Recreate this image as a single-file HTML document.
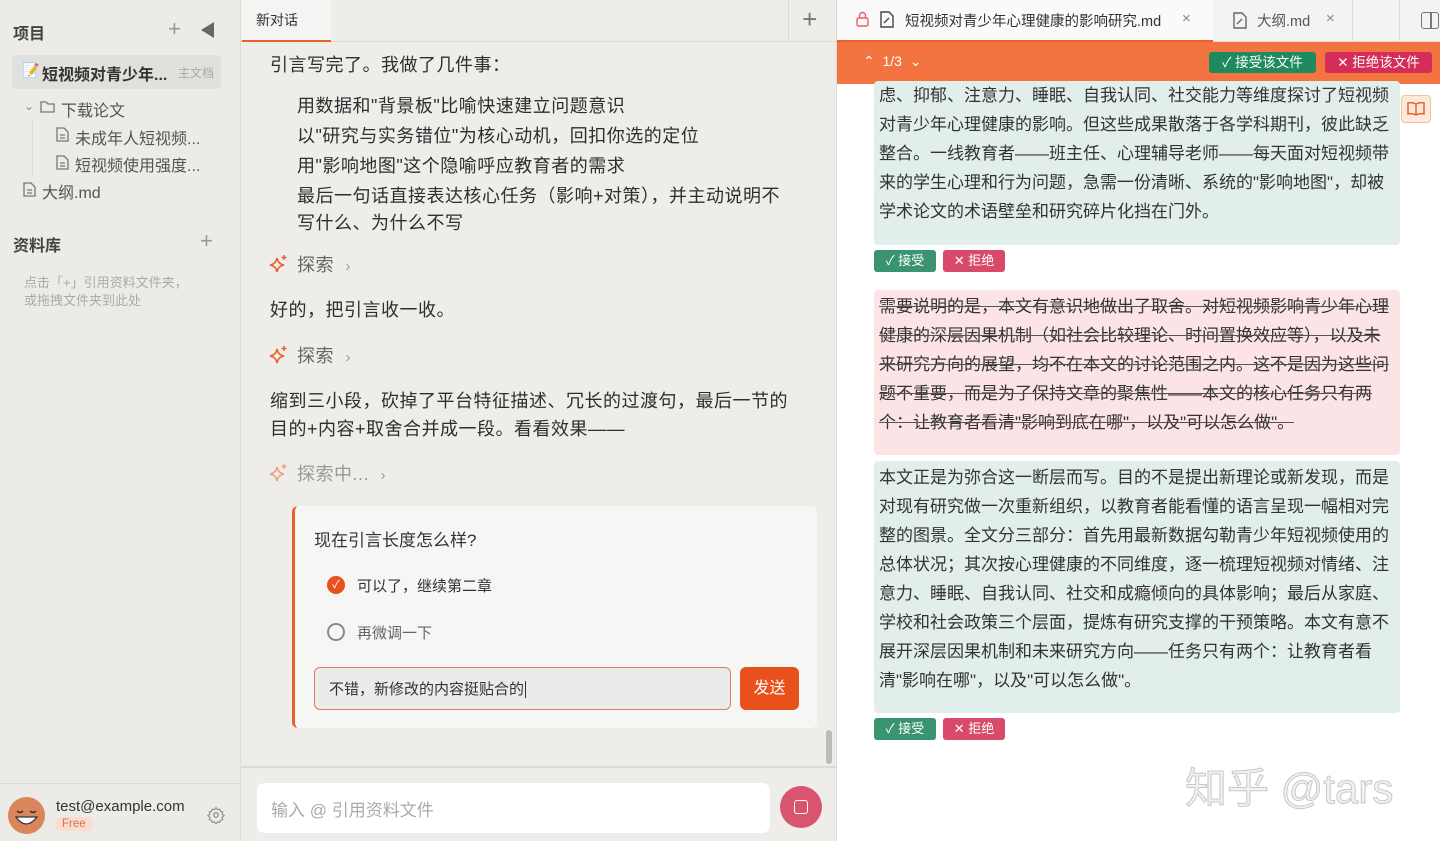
<!DOCTYPE html>
<html><head><meta charset="utf-8"><style>
*{box-sizing:border-box;margin:0;padding:0}
body{width:1440px;height:841px;overflow:hidden;font-family:"Liberation Sans","Noto Sans CJK SC",sans-serif;background:#fff;position:relative;color:#2b2b2b}
.a{position:absolute;white-space:nowrap}
#side{position:absolute;left:0;top:0;width:241px;height:841px;background:#edebe8;border-right:1px solid #dedcd8}
#chat{position:absolute;left:241px;top:0;width:596px;height:841px;background:#eeedea;border-right:1px solid #dcdad6}
#doc{position:absolute;left:837px;top:0;width:603px;height:841px;background:#fff}
.ct{font-size:18px;color:#2e2e2e;letter-spacing:0.5px}
.dl{font-size:17px;line-height:29px;color:#333}
.blk{position:absolute;left:37px;width:526px;padding:0 5px;border-radius:4px}
.btn{position:absolute;height:22px;width:62px;border-radius:3px;color:#fff;font-size:13px;line-height:22px;text-align:center}
</style></head><body>
<div id="side">
 <div class="a" style="left:13px;top:20px;font-size:16px;font-weight:bold;color:#444">项目</div>
 <div class="a" style="left:168px;top:16px;font-size:22px;color:#999;font-weight:300">+</div>
 <svg class="a" style="left:201px;top:22px" width="14" height="16"><path d="M13 0L0 8L13 16Z" fill="#666"/></svg>
 <div class="a" style="left:12px;top:55px;width:209px;height:34px;background:#e2e0dc;border-radius:4px"></div>
 <div class="a" style="left:22px;top:62px;font-size:14px">📝</div>
 <div class="a" style="left:42px;top:61px;font-size:16px;font-weight:bold;color:#333">短视频对青少年...</div>
 <div class="a" style="left:178px;top:64px;font-size:12px;color:#aaa">主文档</div>
 <div class="a" style="left:24px;top:99px;font-size:12px;color:#888">⌄</div>
 <svg class="a" style="left:40px;top:101px" width="15" height="12"><path d="M1 1h5l2 2h6v8H1z" fill="none" stroke="#777" stroke-width="1.3"/></svg>
 <div class="a" style="left:61px;top:97px;font-size:16px;color:#555">下载论文</div>
 <div class="a" style="left:32px;top:120px;width:1px;height:56px;background:#ddd"></div>
 <svg class="a" style="left:56px;top:127px" width="13" height="15"><path d="M1 1h7l4 4v9H1z M4 8h5M4 11h5" fill="none" stroke="#777" stroke-width="1.3"/></svg>
 <div class="a" style="left:75px;top:125px;font-size:16px;color:#555">未成年人短视频...</div>
 <svg class="a" style="left:56px;top:155px" width="13" height="15"><path d="M1 1h7l4 4v9H1z M4 8h5M4 11h5" fill="none" stroke="#777" stroke-width="1.3"/></svg>
 <div class="a" style="left:75px;top:152px;font-size:16px;color:#555">短视频使用强度...</div>
 <svg class="a" style="left:23px;top:182px" width="13" height="15"><path d="M1 1h7l4 4v9H1z M4 8h5M4 11h5" fill="none" stroke="#777" stroke-width="1.3"/></svg>
 <div class="a" style="left:42px;top:179px;font-size:16px;color:#555">大纲.md</div>
 <div class="a" style="left:13px;top:232px;font-size:16px;font-weight:bold;color:#444">资料库</div>
 <div class="a" style="left:200px;top:228px;font-size:22px;color:#999;font-weight:300">+</div>
 <div class="a" style="left:24px;top:274px;font-size:13px;color:#aaa;line-height:18px">点击「+」引用资料文件夹，<br>或拖拽文件夹到此处</div>
 <div class="a" style="left:0;top:783px;width:240px;height:1px;background:#dcdad6"></div>
 <div class="a" style="left:8px;top:797px;width:37px;height:37px;border-radius:50%;background:#d9875a"></div>
 <svg class="a" style="left:8px;top:797px" width="37" height="37"><path d="M9 14q3 3 6 0M22 14q3 3 6 0" stroke="#333" stroke-width="1.5" fill="none"/><path d="M8 20q10 14 21 0z" fill="#fff" stroke="#333" stroke-width="1.2"/></svg>
 <div class="a" style="left:56px;top:798px;font-size:15px;color:#333">test@example.com</div>
 <div class="a" style="left:56px;top:817px;font-size:11.5px;color:#e0704a;background:#f8ddd0;border-radius:4px;padding:1px 6px">Free</div>
 <svg class="a" style="left:207px;top:806px" width="18" height="18" viewBox="0 0 24 24"><circle cx="12" cy="12" r="3" fill="none" stroke="#888" stroke-width="1.6"/><path d="M12 2l2 3 3-1 1 3 3 1-1 3 3 2-3 2 1 3-3 1-1 3-3-1-2 3-2-3-3 1-1-3-3-1 1-3-3-2 3-2-1-3 3-1 1-3 3 1z" fill="none" stroke="#888" stroke-width="1.4"/></svg>
</div>
<div id="chat">
 <div class="a" style="left:0;top:0;width:596px;height:42px;border-bottom:1px solid #dcdad6"></div>
 <div class="a" style="left:1px;top:0;width:89px;height:42px;background:#f5f4f2;border-bottom:2px solid #e8602c"></div>
 <div class="a" style="left:15px;top:10px;font-size:14px;color:#333">新对话</div>
 <div class="a" style="left:547px;top:0;width:1px;height:42px;background:#dcdad6"></div>
 <div class="a" style="left:561px;top:4px;font-size:26px;color:#777;font-weight:300">+</div>
 <div class="a ct" style="left:29px;top:51px">引言写完了。我做了几件事：</div>
 <div class="a ct" style="left:56px;top:92px">用数据和"背景板"比喻快速建立问题意识</div>
 <div class="a ct" style="left:56px;top:122px">以"研究与实务错位"为核心动机，回扣你选的定位</div>
 <div class="a ct" style="left:56px;top:152px">用"影响地图"这个隐喻呼应教育者的需求</div>
 <div class="a ct" style="left:56px;top:182px">最后一句话直接表达核心任务（影响+对策），并主动说明不</div>
 <div class="a ct" style="left:56px;top:209px">写什么、为什么不写</div>
 <svg class="a" style="left:28px;top:254px" width="20" height="20" viewBox="0 0 20 20"><path d="M8 4q1 6 7 7q-6 1-7 7q-1-6-7-7q6-1 7-7z" fill="none" stroke="#e8602c" stroke-width="1.6"/><path d="M15 1v5M12.5 3.5h5" stroke="#e8602c" stroke-width="1.5"/></svg>
 <div class="a ct" style="left:56px;top:251px;color:#666">探索 <span style="font-size:15px;color:#999;margin-left:6px">›</span></div>
 <div class="a ct" style="left:29px;top:296px">好的，把引言收一收。</div>
 <svg class="a" style="left:28px;top:345px" width="20" height="20" viewBox="0 0 20 20"><path d="M8 4q1 6 7 7q-6 1-7 7q-1-6-7-7q6-1 7-7z" fill="none" stroke="#e8602c" stroke-width="1.6"/><path d="M15 1v5M12.5 3.5h5" stroke="#e8602c" stroke-width="1.5"/></svg>
 <div class="a ct" style="left:56px;top:342px;color:#666">探索 <span style="font-size:15px;color:#999;margin-left:6px">›</span></div>
 <div class="a ct" style="left:29px;top:387px">缩到三小段，砍掉了平台特征描述、冗长的过渡句，最后一节的</div>
 <div class="a ct" style="left:29px;top:415px">目的+内容+取舍合并成一段。看看效果——</div>
 <svg class="a" style="left:28px;top:463px" width="20" height="20" viewBox="0 0 20 20"><path d="M8 4q1 6 7 7q-6 1-7 7q-1-6-7-7q6-1 7-7z" fill="none" stroke="#f0a080" stroke-width="1.6"/><path d="M15 1v5M12.5 3.5h5" stroke="#f0a080" stroke-width="1.5"/></svg>
 <div class="a ct" style="left:56px;top:460px;color:#999">探索中... <span style="font-size:15px;color:#999;margin-left:6px">›</span></div>
 <div class="a" style="left:51px;top:506px;width:525px;height:222px;background:#f6f6f5;border-left:3px solid #e8602c;border-radius:6px"></div>
 <div class="a" style="left:73px;top:526px;font-size:17px;color:#333">现在引言长度怎么样?</div>
 <div class="a" style="left:86px;top:576px;width:18px;height:18px;border-radius:50%;background:#e8501c;color:#fff;font-size:11px;text-align:center;line-height:18px">✓</div>
 <div class="a" style="left:116px;top:575px;font-size:15px;color:#333">可以了，继续第二章</div>
 <div class="a" style="left:86px;top:623px;width:18px;height:18px;border-radius:50%;border:2px solid #888"></div>
 <div class="a" style="left:116px;top:622px;font-size:15px;color:#666">再微调一下</div>
 <div class="a" style="left:73px;top:667px;width:417px;height:43px;background:#ebebea;border:1px solid #d9805a;border-radius:6px"></div>
 <div class="a" style="left:88px;top:678px;font-size:15px;color:#333">不错，新修改的内容挺贴合的<span style="border-left:1px solid #333;margin-left:1px"></span></div>
 <div class="a" style="left:499px;top:667px;width:59px;height:43px;background:#e8501c;border-radius:6px;color:#fff;font-size:16px;text-align:center;line-height:43px">发送</div>
 <div class="a" style="left:585px;top:730px;width:6px;height:34px;background:#bbb;border-radius:3px"></div>
 <div class="a" style="left:0;top:766px;width:596px;height:2px;background:#dcdad6"></div>
 <div class="a" style="left:16px;top:783px;width:513px;height:50px;background:#fff;border-radius:8px"></div>
 <div class="a" style="left:30px;top:796px;font-size:17px;color:#aaa">输入 @ 引用资料文件</div>
 <div class="a" style="left:539px;top:786px;width:42px;height:42px;border-radius:50%;background:#d9546e"></div>
 <div class="a" style="left:553px;top:800px;width:14px;height:14px;border:1.5px solid #fff;border-radius:3px"></div>
</div>
<div id="doc">
 <div class="a" style="left:0;top:0;width:603px;height:42px;background:#f3f3f2;border-bottom:1px solid #ddd"></div>
 <div class="a" style="left:0;top:0;width:376px;height:42px;background:#fafafa;border-bottom:2px solid #e8602c"></div>
 <svg class="a" style="left:19px;top:11px" width="13" height="16"><rect x="1" y="7" width="11" height="8" rx="1.5" fill="none" stroke="#e86060" stroke-width="1.4"/><path d="M3.5 7V4.5a3 3 0 016 0V7" fill="none" stroke="#e86060" stroke-width="1.4"/></svg>
 <svg class="a" style="left:43px;top:11px" width="14" height="17"><path d="M1 1h8l4 4v11H1z M4 12l5-5" fill="none" stroke="#444" stroke-width="1.4"/></svg>
 <div class="a" style="left:68px;top:10px;font-size:14.5px;color:#333">短视频对青少年心理健康的影响研究.md</div>
 <div class="a" style="left:345px;top:10px;font-size:15px;color:#888">×</div>
 <svg class="a" style="left:396px;top:12px" width="14" height="17"><path d="M1 1h8l4 4v11H1z M4 12l5-5" fill="none" stroke="#666" stroke-width="1.4"/></svg>
 <div class="a" style="left:420px;top:10px;font-size:14.5px;color:#555">大纲.md</div>
 <div class="a" style="left:489px;top:10px;font-size:15px;color:#888">×</div>
 <div class="a" style="left:515px;top:0;width:1px;height:42px;background:#ddd"></div>
 <div class="a" style="left:562px;top:0;width:1px;height:42px;background:#ddd"></div>
 <div class="a" style="left:584px;top:12px;width:18px;height:17px;border:1.5px solid #777;border-radius:3px"></div>
 <div class="a" style="left:593px;top:12px;width:1.5px;height:17px;background:#777"></div>
 <div class="a" style="left:0;top:42px;width:603px;height:42px;background:#f37341"></div>
 <div class="a" style="left:26px;top:53px;font-size:14px;color:#fff">⌃ &nbsp;1/3 &nbsp;⌄</div>
 <div class="a" style="left:372px;top:52px;width:107px;height:21px;background:#1e8a5e;border-radius:3px;color:#fff;font-size:13.5px;line-height:21px;text-align:center">✓ 接受该文件</div>
 <div class="a" style="left:488px;top:52px;width:107px;height:21px;background:#d42d58;border-radius:3px;color:#fff;font-size:13.5px;line-height:21px;text-align:center">✕ 拒绝该文件</div>
 <div class="blk dl" style="top:81px;height:164px;background:#e2eeea">虑、抑郁、注意力、睡眠、自我认同、社交能力等维度探讨了短视频<br>对青少年心理健康的影响。但这些成果散落于各学科期刊，彼此缺乏<br>整合。一线教育者——班主任、心理辅导老师——每天面对短视频带<br>来的学生心理和行为问题，急需一份清晰、系统的"影响地图"，却被<br>学术论文的术语壁垒和研究碎片化挡在门外。</div>
 <div class="a" style="left:564px;top:95px;width:30px;height:28px;background:#fde8dc;border:1px solid #f4c0a0;border-radius:4px"></div>
 <svg class="a" style="left:570px;top:101px" width="18" height="16"><path d="M9 3Q5 1 1 2v11q4-1 8 1q4-2 8-1V2q-4-1-8 1zM9 3v11" fill="none" stroke="#e8602c" stroke-width="1.5"/></svg>
 <div class="btn" style="left:37px;top:250px;background:#3a9470">✓ 接受</div>
 <div class="btn" style="left:106px;top:250px;background:#d84a6a">✕ 拒绝</div>
 <div class="blk dl" style="top:290px;height:165px;background:#fbe3e6;padding-top:2px;text-decoration:line-through;text-decoration-color:#555">需要说明的是，本文有意识地做出了取舍。对短视频影响青少年心理<br>健康的深层因果机制（如社会比较理论、时间置换效应等），以及未<br>来研究方向的展望，均不在本文的讨论范围之内。这不是因为这些问<br>题不重要，而是为了保持文章的聚焦性——本文的核心任务只有两<br>个：让教育者看清"影响到底在哪"，以及"可以怎么做"。</div>
 <div class="blk dl" style="top:461px;height:252px;background:#e2eeea;padding-top:2px">本文正是为弥合这一断层而写。目的不是提出新理论或新发现，而是<br>对现有研究做一次重新组织，以教育者能看懂的语言呈现一幅相对完<br>整的图景。全文分三部分：首先用最新数据勾勒青少年短视频使用的<br>总体状况；其次按心理健康的不同维度，逐一梳理短视频对情绪、注<br>意力、睡眠、自我认同、社交和成瘾倾向的具体影响；最后从家庭、<br>学校和社会政策三个层面，提炼有研究支撑的干预策略。本文有意不<br>展开深层因果机制和未来研究方向——任务只有两个：让教育者看<br>清"影响在哪"，以及"可以怎么做"。</div>
 <div class="btn" style="left:37px;top:718px;background:#3a9470">✓ 接受</div>
 <div class="btn" style="left:106px;top:718px;background:#d84a6a">✕ 拒绝</div>
 <div class="a" style="left:348px;top:755px;font-size:42px;color:#f2f2f2;-webkit-text-stroke:1px #c8c8c8">知乎 @tars</div>
</div>
</body></html>
